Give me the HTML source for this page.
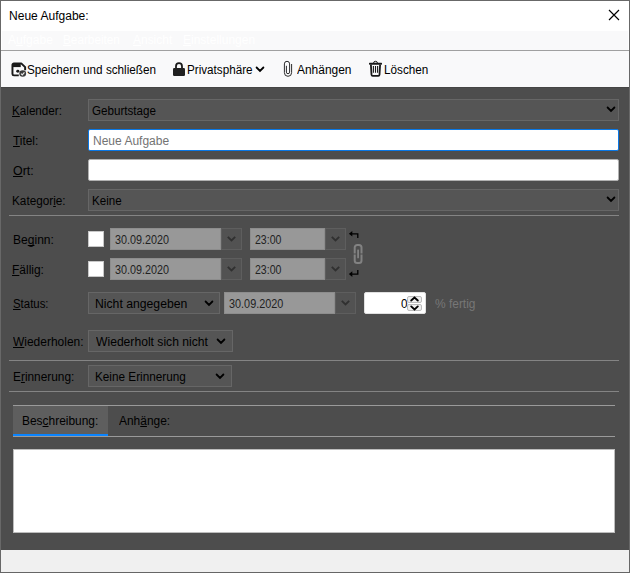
<!DOCTYPE html>
<html lang="de">
<head>
<meta charset="utf-8">
<title>Neue Aufgabe:</title>
<style>
html,body{margin:0;padding:0;}
body{width:630px;height:573px;overflow:hidden;background:#4d4d4d;font-family:"Liberation Sans",sans-serif;font-size:12px;color:#000;position:relative;}
#win{position:absolute;left:0;top:0;width:630px;height:573px;overflow:hidden;}
.abs{position:absolute;}
.t{position:absolute;white-space:nowrap;line-height:16px;height:16px;transform-origin:0 0;}
u{text-decoration:underline;text-decoration-skip-ink:none;text-underline-offset:1px;text-decoration-thickness:1px;}
#titlebar{left:1px;top:1px;width:628px;height:30px;background:#fff;}
#menubar{left:2px;top:31px;width:626px;height:19px;background:#f9f9fa;}
#menubar .t{color:#fff;}
#tsep{left:1px;top:50px;width:628px;height:1px;background:#a0a0a0;}
#toolbar{left:1px;top:51px;width:628px;height:36px;background:#f9f9fa;}
#panel{left:1px;top:87px;width:628px;height:463px;background:#4d4d4d;}
#statusbar{left:1px;top:550px;width:628px;height:22px;background:#f0f0f0;}
.sel{position:absolute;box-sizing:border-box;height:22px;background:#555;border:1px solid #666;}
.inp{position:absolute;box-sizing:border-box;height:22px;background:#fff;border:1px solid #b1b1b1;border-radius:2px;}
.dis{position:absolute;box-sizing:border-box;height:22px;background:#989898;border:1px solid #8d8d8d;}
.dbtn{position:absolute;box-sizing:border-box;height:22px;width:21px;background:#525252;border:1px solid #5e5e5e;}
.sep{position:absolute;height:1px;background:#848484;}
.cb{position:absolute;box-sizing:border-box;width:16px;height:16px;background:#fff;border:1px solid #c8c8c8;}
svg{position:absolute;overflow:visible;}
</style>
</head>
<body>
<div id="win">
  <div class="abs" style="left:0;top:0;width:630px;height:573px;background:#686868;"></div>
  <div id="titlebar" class="abs"></div>
  <div class="abs" style="left:1px;top:31px;width:628px;height:20px;background:#fff;"></div>
  <div id="menubar" class="abs"></div>
  <div id="tsep" class="abs"></div>
  <div id="toolbar" class="abs"></div>
  <div id="panel" class="abs"></div>
  <div class="abs" style="left:1px;top:87px;width:628px;height:1px;background:#454545;"></div>
  <div id="statusbar" class="abs"></div>
    <div class="abs" style="left:0;top:572px;width:630px;height:1px;background:#666;"></div>

  <!-- title -->
  <span class="t" id="t_title" style="left:8.80px;top:8px;transform:scaleX(1.0032);">Neue Aufgabe:</span>
  <svg style="left:609px;top:10px;" width="10" height="10" viewBox="0 0 10 10"><path d="M0 0 L10 10 M10 0 L0 10" stroke="#000" stroke-width="1.15" fill="none"/></svg>

  <!-- menu -->
  <span class="t" id="m1" style="left:7.60px;top:32px;color:#fff;transform:scaleX(1.0034);">A<u>u</u>fgabe</span>
  <span class="t" id="m2" style="left:63.22px;top:32px;color:#fff;transform:scaleX(0.9796);"><u>B</u>earbeiten</span>
  <span class="t" id="m3" style="left:132.50px;top:32px;color:#fff;transform:scaleX(0.9962);"><u>A</u>nsicht</span>
  <span class="t" id="m4" style="left:183.30px;top:32px;color:#fff;transform:scaleX(1.0007);"><u>E</u>instellungen</span>

  <!-- toolbar -->
  <svg id="ic_save" style="left:10.6px;top:61.5px;" width="15.6" height="14.8" viewBox="0 0 16 16" preserveAspectRatio="none">
    <path d="M3 1.5 H10.5 L14.5 5.5 V9 M8 14.5 H3 A1.5 1.5 0 0 1 1.5 13 V3 A1.5 1.5 0 0 1 3 1.5" fill="none" stroke="#1a1a1a" stroke-width="2" stroke-linejoin="round"/>
    <rect x="2" y="2" width="8" height="3.5" fill="#1a1a1a"/>
    <circle cx="7" cy="10" r="1.6" fill="#1a1a1a"/>
    <circle cx="12" cy="12.5" r="3.5" fill="#3a3a3a"/>
    <path d="M10.3 12.6 L11.6 13.9 L13.8 11.2" fill="none" stroke="#e8e8e8" stroke-width="1.2"/>
  </svg>
  <span class="t" id="tb1" style="left:26.91px;top:62px;transform:scaleX(0.9771);">Speichern und schließen</span>
  <svg id="ic_lock" style="left:173px;top:62px;" width="12" height="15" viewBox="0 0 12 15">
    <path d="M3 7 V4.2 A3 3 0 0 1 9 4.2 V7" fill="none" stroke="#1a1a1a" stroke-width="1.8"/>
    <rect x="0" y="6" width="12" height="7.9" rx="1.2" fill="#202020"/>
  </svg>
  <span class="t" id="tb2" style="left:187.43px;top:62px;transform:scaleX(0.9727);">Privatsphäre</span>
  <svg style="left:255.4px;top:66.2px;" width="10" height="7" viewBox="0 0 10 7"><path d="M1.6 1.5 L5 4.9 L8.4 1.5" fill="none" stroke="#000" stroke-width="1.8" stroke-linecap="round"/></svg>
  <svg id="ic_clip" style="left:283px;top:60px;" width="10" height="18" viewBox="0 0 10 18">
    <path d="M8.6 4 V12.7 A3.6 3.6 0 0 1 1.4 12.7 V3.9 A2.6 2.6 0 0 1 6.6 3.9 V12.1 A1.6 1.6 0 0 1 3.4 12.1 V5.8" fill="none" stroke="#222" stroke-width="0.95"/>
  </svg>
  <span class="t" id="tb3" style="left:297.30px;top:62px;transform:scaleX(0.9963);">Anhängen</span>
  <svg id="ic_trash" style="left:368px;top:60px;" width="15" height="18" viewBox="0 0 15 18">
    <rect x="1" y="2.7" width="13" height="2" rx="0.6" fill="#1a1a1a"/>
    <path d="M5.6 3 A1.9 1.7 0 0 1 9.4 3" fill="none" stroke="#1a1a1a" stroke-width="1"/>
    <path d="M2.9 4.6 L3.5 14.7 A1.2 1.2 0 0 0 4.7 15.8 H10.3 A1.2 1.2 0 0 0 11.5 14.7 L12.1 4.6" fill="none" stroke="#1a1a1a" stroke-width="1.8"/>
    <path d="M5.4 6 V12.7 M7.5 6 V12.7 M9.6 6 V12.7" stroke="#1a1a1a" stroke-width="1.1"/>
  </svg>
  <span class="t" id="tb4" style="left:383.62px;top:62px;transform:scaleX(0.9760);">Löschen</span>

  <!-- row: Kalender -->
  <span class="t" id="l1" style="left:12.43px;top:103px;transform:scaleX(0.9726);"><u>K</u>alender:</span>
  <div class="sel" style="left:88px;top:99px;width:531px;"></div>
  <span class="t" id="v1" style="left:92.12px;top:103px;transform:scaleX(0.9692);">Geburtstage</span>
  <svg class="chev" style="left:606px;top:106px;" width="10" height="7" viewBox="0 0 10 7"><path d="M1.6 1.5 L5 4.9 L8.4 1.5" fill="none" stroke="#000" stroke-width="1.8" stroke-linecap="round"/></svg>

  <!-- row: Titel -->
  <span class="t" id="l2" style="left:12.95px;top:133px;transform:scaleX(0.9897);"><u>T</u>itel:</span>
  <div class="inp" style="left:88px;top:129px;width:531px;border-color:#0a78e6;"></div>
  <span class="t" id="v2" style="left:93.00px;top:133px;color:#737373;transform:scaleX(1.0013);">Neue Aufgabe</span>

  <!-- row: Ort -->
  <span class="t" id="l3" style="left:12.68px;top:163px;transform:scaleX(1.0324);"><u>O</u>rt:</span>
  <div class="inp" style="left:88px;top:159px;width:531px;"></div>

  <!-- row: Kategorie -->
  <span class="t" id="l4" style="left:12.42px;top:193px;transform:scaleX(0.9801);">Kategor<u>i</u>e:</span>
  <div class="sel" style="left:88px;top:189px;width:531px;"></div>
  <span class="t" id="v4" style="left:91.64px;top:193px;transform:scaleX(0.9641);">Keine</span>
  <svg class="chev" style="left:606px;top:196px;" width="10" height="7" viewBox="0 0 10 7"><path d="M1.6 1.5 L5 4.9 L8.4 1.5" fill="none" stroke="#000" stroke-width="1.8" stroke-linecap="round"/></svg>

  <div class="sep" style="left:9px;top:215px;width:610px;"></div>

  <!-- Beginn -->
  <span class="t" id="l5" style="left:12.60px;top:232px;transform:scaleX(1.0039);">Be<u>g</u>inn:</span>
  <div class="cb" style="left:88px;top:231px;"></div>
  <div class="dis" style="left:110px;top:228px;width:111px;"></div>
  <span class="t d" id="d1" style="left:115.05px;top:232px;color:#222;transform:scaleX(0.8996);">30.09.2020</span>
  <div class="dbtn" style="left:221px;top:228px;"></div>
  <svg style="left:227px;top:236px;" width="9" height="6" viewBox="0 0 9 6"><path d="M0.8 0.9 L4.5 4.5 L8.2 0.9" fill="none" stroke="#303030" stroke-width="1.8"/></svg>
  <div class="dis" style="left:250px;top:228px;width:75px;"></div>
  <span class="t d" id="h1" style="left:255.06px;top:232px;color:#222;transform:scaleX(0.8786);">23:00</span>
  <div class="dbtn" style="left:325px;top:228px;"></div>
  <svg style="left:331px;top:236px;" width="9" height="6" viewBox="0 0 9 6"><path d="M0.8 0.9 L4.5 4.5 L8.2 0.9" fill="none" stroke="#303030" stroke-width="1.8"/></svg>

  <!-- Fällig -->
  <span class="t" id="l6" style="left:12.40px;top:262px;transform:scaleX(0.9967);"><u>F</u>ällig:</span>
  <div class="cb" style="left:88px;top:261px;"></div>
  <div class="dis" style="left:110px;top:258px;width:111px;"></div>
  <span class="t d" id="d2" style="left:115.05px;top:262px;color:#222;transform:scaleX(0.8996);">30.09.2020</span>
  <div class="dbtn" style="left:221px;top:258px;"></div>
  <svg style="left:227px;top:266px;" width="9" height="6" viewBox="0 0 9 6"><path d="M0.8 0.9 L4.5 4.5 L8.2 0.9" fill="none" stroke="#303030" stroke-width="1.8"/></svg>
  <div class="dis" style="left:250px;top:258px;width:75px;"></div>
  <span class="t d" id="h2" style="left:255.06px;top:262px;color:#222;transform:scaleX(0.8786);">23:00</span>
  <div class="dbtn" style="left:325px;top:258px;"></div>
  <svg style="left:331px;top:266px;" width="9" height="6" viewBox="0 0 9 6"><path d="M0.8 0.9 L4.5 4.5 L8.2 0.9" fill="none" stroke="#303030" stroke-width="1.8"/></svg>

  <!-- arrows + link -->
  <svg style="left:349px;top:230px;" width="11" height="9" viewBox="0 0 11 9"><path d="M-0.1 3.7 L3.3 0.9 V6.5 Z" fill="#000"/><path d="M3 3.8 H8.8 V7.9" fill="none" stroke="#000" stroke-width="1.3"/></svg>
  <svg style="left:349px;top:269px;" width="11" height="9" viewBox="0 0 11 9"><path d="M-0.1 5.1 L3.3 2.3 V7.9 Z" fill="#000"/><path d="M3 5.1 H8.8 V1" fill="none" stroke="#000" stroke-width="1.3"/></svg>
  <svg id="ic_link" style="left:353px;top:243px;" width="10" height="22" viewBox="0 0 10 22">
    <path d="M1.7 10.6 V4.5 A2.5 2.5 0 0 1 4.2 2 H6 A2.5 2.5 0 0 1 8.5 4.5 V10.6" fill="none" stroke="#828282" stroke-width="2"/>
    <path d="M1.7 11.4 V17.5 A2.5 2.5 0 0 0 4.2 20 H6 A2.5 2.5 0 0 0 8.5 17.5 V11.4" fill="none" stroke="#828282" stroke-width="2"/>
    <rect x="4.2" y="6.5" width="1.8" height="8.8" rx="0.5" fill="#828282"/>
  </svg>

  <!-- Status -->
  <span class="t" id="l7" style="left:12.72px;top:296px;transform:scaleX(0.9510);"><u>S</u>tatus:</span>
  <div class="sel" style="left:88px;top:292px;width:132px;"></div>
  <span class="t" id="v7" style="left:95.38px;top:296px;transform:scaleX(1.0169);">Nicht angegeben</span>
  <svg class="chev" style="left:203.5px;top:299.5px;" width="10" height="7" viewBox="0 0 10 7"><path d="M1.6 1.5 L5 4.9 L8.4 1.5" fill="none" stroke="#000" stroke-width="1.8" stroke-linecap="round"/></svg>
  <div class="dis" style="left:224px;top:292px;width:111px;"></div>
  <span class="t d" id="d3" style="left:228.85px;top:296px;color:#222;transform:scaleX(0.9046);">30.09.2020</span>
  <div class="dbtn" style="left:335px;top:292px;"></div>
  <svg style="left:341px;top:300px;" width="9" height="6" viewBox="0 0 9 6"><path d="M0.8 0.9 L4.5 4.5 L8.2 0.9" fill="none" stroke="#303030" stroke-width="1.8"/></svg>
  <div class="inp" style="left:364px;top:292px;width:62px;border-color:#e0e0e0;"></div>
  <span class="t" id="n0" style="left:400.81px;top:296px;transform:scaleX(0.9739);">0</span>
  <div class="abs" style="left:407px;top:296px;width:15px;height:7px;box-sizing:border-box;background:#eee;border:1px solid #bcbcbc;border-radius:2px;"></div>
  <div class="abs" style="left:407px;top:304px;width:15px;height:7px;box-sizing:border-box;background:#eee;border:1px solid #bcbcbc;border-radius:2px;"></div>
  <svg style="left:410.2px;top:296.4px;" width="9" height="6" viewBox="0 0 9 6"><path d="M1.2 4.5 L4.5 1.5 L7.8 4.5" fill="none" stroke="#000" stroke-width="1.9" stroke-linecap="round"/></svg>
  <svg style="left:410.2px;top:304.6px;" width="9" height="6" viewBox="0 0 9 6"><path d="M1.2 1.4 L4.5 4.4 L7.8 1.4" fill="none" stroke="#000" stroke-width="1.9" stroke-linecap="round"/></svg>
  <span class="t" id="pf" style="left:434.50px;top:296px;color:#777;transform:scaleX(0.9949);">% fertig</span>

  <!-- Wiederholen -->
  <span class="t" id="l8" style="left:13.00px;top:334px;transform:scaleX(0.9978);"><u>W</u>iederholen:</span>
  <div class="sel" style="left:88px;top:330px;width:145px;"></div>
  <span class="t" id="v8" style="left:96.20px;top:334px;transform:scaleX(1.0104);">Wiederholt sich nicht</span>
  <svg class="chev" style="left:216px;top:337.5px;" width="10" height="7" viewBox="0 0 10 7"><path d="M1.6 1.5 L5 4.9 L8.4 1.5" fill="none" stroke="#000" stroke-width="1.8" stroke-linecap="round"/></svg>

  <div class="sep" style="left:9px;top:360px;width:610px;"></div>

  <!-- Erinnerung -->
  <span class="t" id="l9" style="left:12.71px;top:369px;transform:scaleX(0.9883);">E<u>r</u>innerung:</span>
  <div class="sel" style="left:88px;top:365px;width:144px;"></div>
  <span class="t" id="v9" style="left:95.42px;top:369px;transform:scaleX(0.9791);">Keine Erinnerung</span>
  <svg class="chev" style="left:215px;top:372.5px;" width="10" height="7" viewBox="0 0 10 7"><path d="M1.6 1.5 L5 4.9 L8.4 1.5" fill="none" stroke="#000" stroke-width="1.8" stroke-linecap="round"/></svg>

  <div class="sep" style="left:9px;top:391px;width:610px;"></div>

  <!-- tabs -->
  <div class="abs" style="left:13px;top:405px;width:602px;height:1px;background:#9a9a9a;"></div>
  <div class="abs" style="left:13px;top:406px;width:95px;height:28px;background:#5e5e5e;"></div>
  <div class="abs" style="left:13px;top:436px;width:602px;height:1px;background:#9a9a9a;"></div>
  <div class="abs" style="left:13px;top:434px;width:95px;height:2px;background:#0a84ff;"></div>
  <span class="t" id="tab1" style="left:22.11px;top:413px;transform:scaleX(0.9940);">Bes<u>c</u>hreibung:</span>
  <span class="t" id="tab2" style="left:118.60px;top:413px;transform:scaleX(0.9950);">Anh<u>ä</u>nge:</span>

  <!-- textarea -->
  <div class="abs" style="left:13px;top:449px;width:602px;height:84px;box-sizing:border-box;background:#fff;border:1px solid #bdbdbd;"></div>
</div>
</body>
</html>
